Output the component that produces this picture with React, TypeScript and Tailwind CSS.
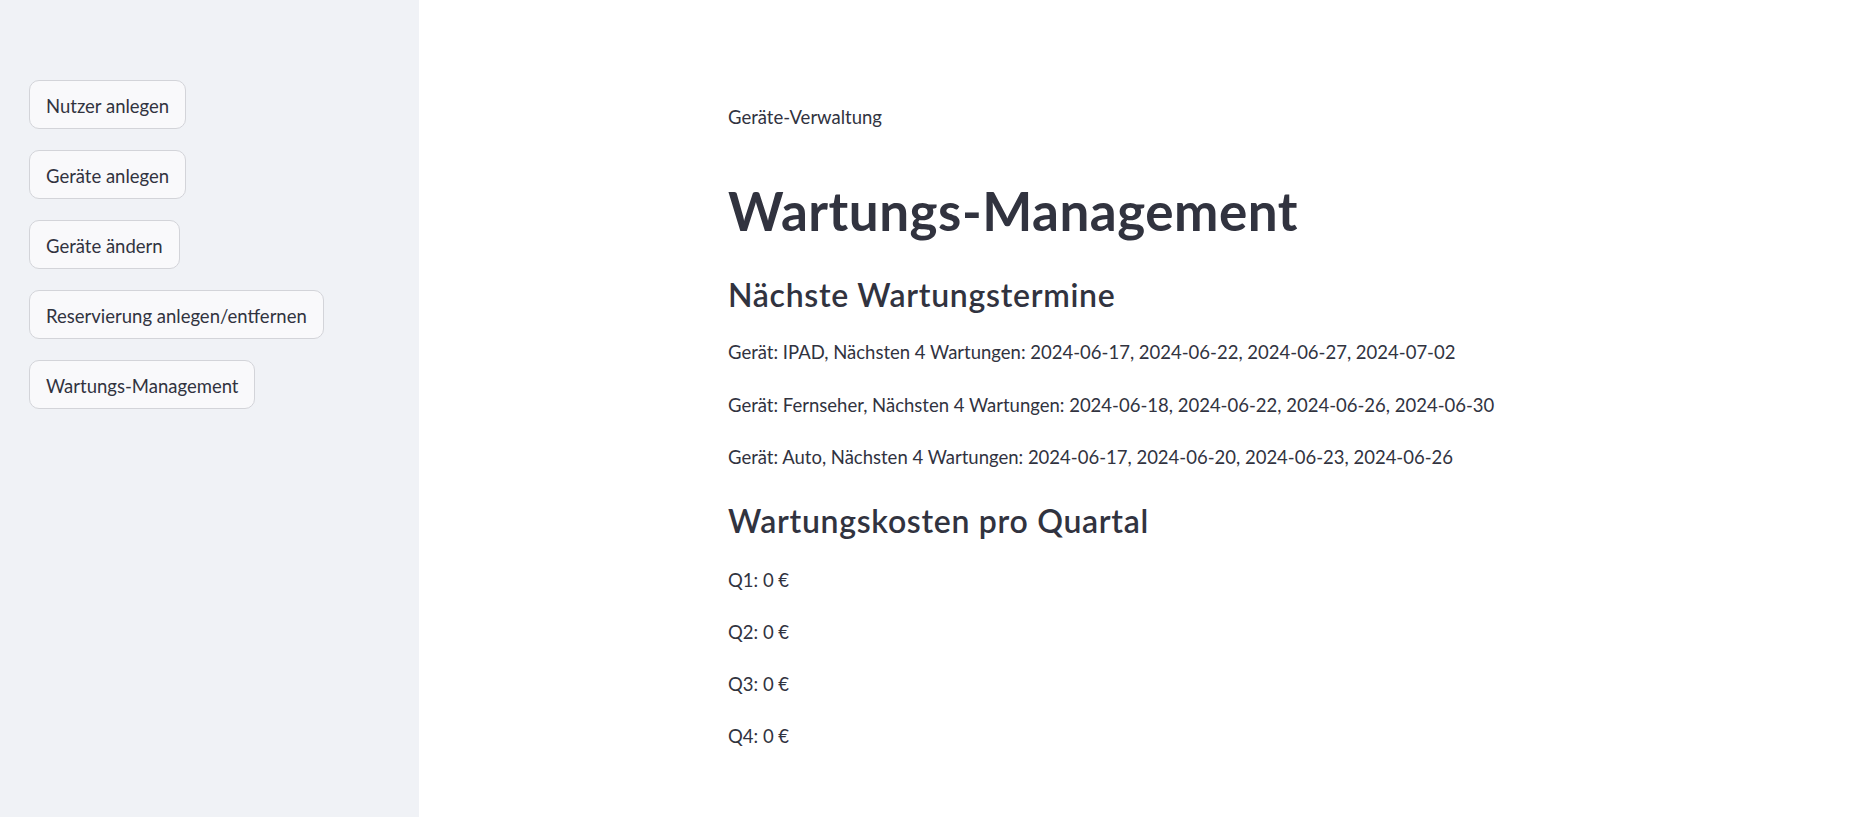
const buttons = [
  "Nutzer anlegen",
  "Geräte anlegen",
  "Geräte ändern",
  "Reservierung anlegen/entfernen",
  "Wartungs-Management",
];

const termine = [
  "Gerät: IPAD, Nächsten 4 Wartungen: 2024-06-17, 2024-06-22, 2024-06-27, 2024-07-02",
  "Gerät: Fernseher, Nächsten 4 Wartungen: 2024-06-18, 2024-06-22, 2024-06-26, 2024-06-30",
  "Gerät: Auto, Nächsten 4 Wartungen: 2024-06-17, 2024-06-20, 2024-06-23, 2024-06-26",
];

export default function App() {
  return (
    <div className="flex h-[817px] w-full overflow-hidden bg-white font-['Lato','Noto_Sans',sans-serif] text-[#31333f]">
      {/* Sidebar */}
      <aside className="w-[419px] shrink-0 bg-[#f0f2f6] pl-[29px] pt-[80px]">
        <div className="flex flex-col items-start gap-[21px]">
          {buttons.map((b) => (
            <button
              key={b}
              className="h-[49px] rounded-[10px] border border-[#d3d4d9] bg-[#f9f9fb] px-[16px] pt-[4px] text-[18.5px] leading-none"
            >
              {b}
            </button>
          ))}
        </div>
      </aside>

      {/* Main */}
      <main className="flex-1">
        <div className="mx-auto w-[824px] pt-[101px]">
          <p className="text-[18.5px] leading-[32px]">Geräte-Verwaltung</p>
          <h1 className="mt-[45px] text-[53px] font-bold leading-[66px] tracking-[0.5px]">Wartungs-Management</h1>
          <h2 className="mt-[33px] text-[32px] font-semibold leading-[36px] tracking-[0.7px]">Nächste Wartungstermine</h2>
          <div className="mt-[23px] flex flex-col gap-[20.5px]">
            {termine.map((t) => (
              <p key={t} className="text-[18.5px] leading-[32px]">{t}</p>
            ))}
          </div>
          <h2 className="mt-[30px] text-[32px] font-semibold leading-[36px] tracking-[0.7px]">Wartungskosten pro Quartal</h2>
          <div className="mt-[25px] flex flex-col gap-[20px]">
            {["Q1", "Q2", "Q3", "Q4"].map((q) => (
              <p key={q} className="text-[18.5px] leading-[32px]">{q}: 0 €</p>
            ))}
          </div>
        </div>
      </main>
    </div>
  );
}
